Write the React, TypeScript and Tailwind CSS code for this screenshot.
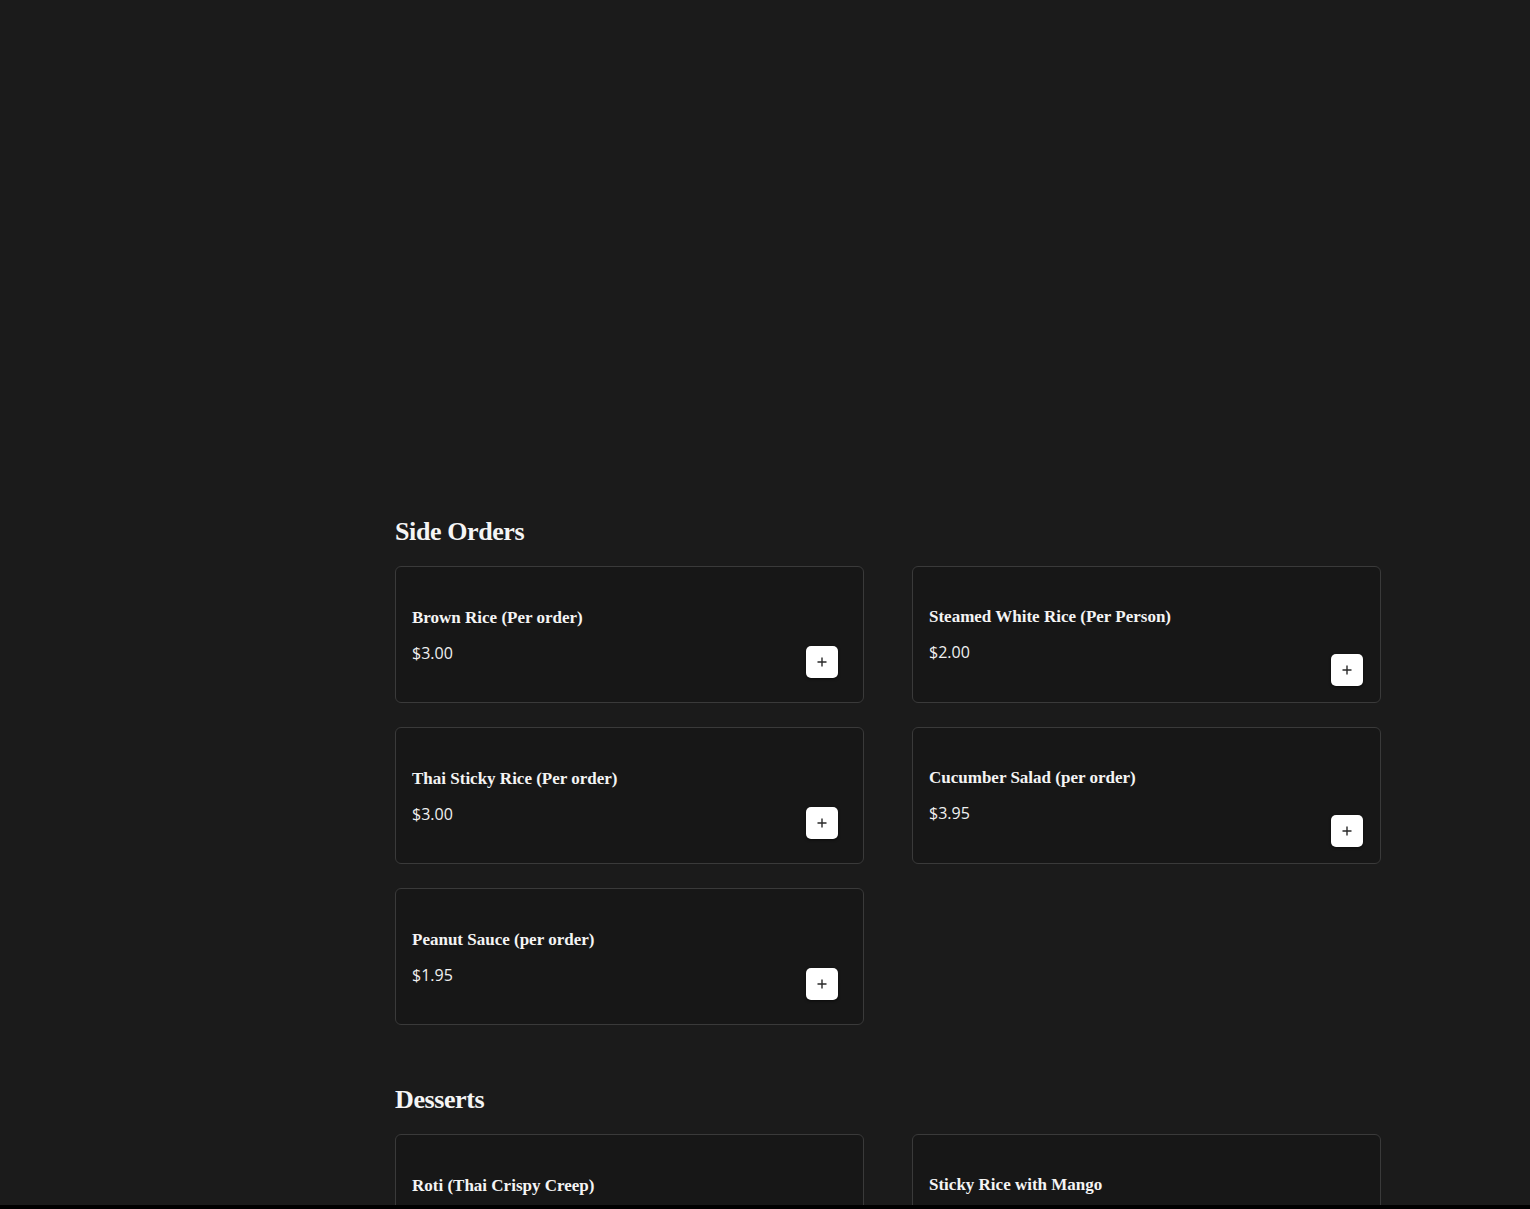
import React from "react";

type Item = { name: string; price?: string; side: "l" | "r" };

const serif = { fontFamily: '"Liberation Serif", "DejaVu Serif", serif' };

function PlusButton({ side }: { side: "l" | "r" }) {
  return (
    <button
      className={
        "flex h-8 w-8 shrink-0 items-center justify-center self-end rounded-[5px] bg-white shadow-[0_1px_3px_rgba(0,0,0,0.6)] " +
        (side === "l" ? "mb-[24px] mr-[25px]" : "mb-[16px] mr-[17px]")
      }
    >
      <svg width="12" height="12" viewBox="0 0 12 12">
        <path d="M6 1.5v9M1.5 6h9" stroke="#2a2a2a" strokeWidth="1.4" />
      </svg>
    </button>
  );
}

function Card({ item }: { item: Item }) {
  return (
    <div className="flex h-[137px] rounded-[6px] border border-[#3a3a3a] bg-[#171717]">
      <div className={"flex flex-1 flex-col pl-4 " + (item.side === "l" ? "pt-[39px]" : "pt-[38px]")}>
        <div className="text-[17px] font-bold leading-6 text-[#f4f4f4]" style={serif}>
          {item.name}
        </div>
        {item.price && (
          <div
            className="mt-[11px] text-[16px] font-normal leading-6 text-[#f0f0f0]"
            style={{ fontFamily: '"Open Sans", "Noto Sans", sans-serif' }}
          >
            {item.price}
          </div>
        )}
      </div>
      {item.price && <PlusButton side={item.side} />}
    </div>
  );
}

function Section({ title, items, className }: { title: string; items: Item[]; className?: string }) {
  return (
    <section className={className}>
      <h2
        className="mb-[18px] text-[26px] font-bold leading-8 text-[#f5f5f5] tracking-[-0.4px]"
        style={serif}
      >
        {title}
      </h2>
      <div className="grid grid-cols-2 gap-x-[48px] gap-y-[24px]">
        {items.map((it) => (
          <Card key={it.name} item={it} />
        ))}
      </div>
    </section>
  );
}

export default function App() {
  const sides: Item[] = [
    { name: "Brown Rice (Per order)", price: "$3.00", side: "l" },
    { name: "Steamed White Rice (Per Person)", price: "$2.00", side: "r" },
    { name: "Thai Sticky Rice (Per order)", price: "$3.00", side: "l" },
    { name: "Cucumber Salad (per order)", price: "$3.95", side: "r" },
    { name: "Peanut Sauce (per order)", price: "$1.95", side: "l" },
  ];
  const desserts: Item[] = [
    { name: "Roti (Thai Crispy Creep)", side: "l" },
    { name: "Sticky Rice with Mango", side: "r" },
  ];
  return (
    <div className="flex h-[1209px] flex-col overflow-hidden bg-black">
      <div className="h-[1205px] overflow-hidden bg-[#1b1b1b]">
        <div className="ml-[395px] w-[986px] pt-[516px]">
          <Section title="Side Orders" items={sides} />
          <Section title="Desserts" items={desserts} className="mt-[59px]" />
        </div>
      </div>
      <div className="h-1 bg-black" />
    </div>
  );
}
